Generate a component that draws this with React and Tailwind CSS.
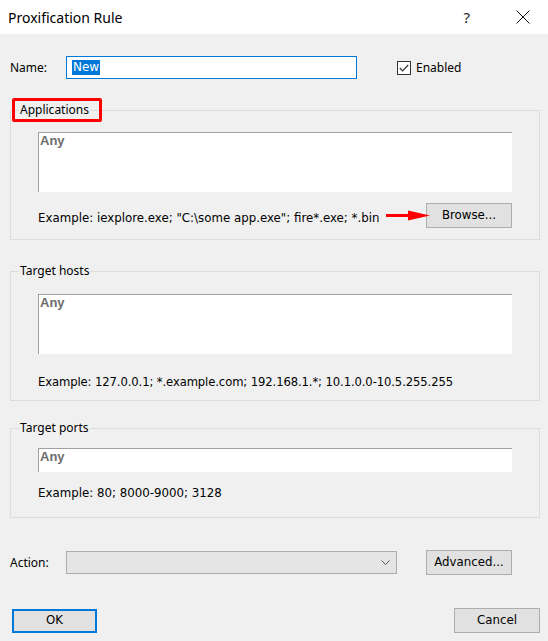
export default function App() {
  const ui = "font-['Noto_Sans',sans-serif]";
  const tah = "font-['DejaVu_Sans',sans-serif]";
  return (
    <div className={`w-[548px] h-[641px] bg-[#f0f0f0] flex flex-col overflow-hidden text-black ${ui} text-[12px]`}>
      {/* Title bar */}
      <div className="h-[34px] bg-white flex items-center shrink-0">
        <span className="pl-[8px] text-[14px] text-black">Proxification Rule</span>
        <span className="ml-auto mr-[46px] text-[15px] text-[#222]">?</span>
        <span className="mr-[18px] flex">
          <svg width="14" height="14" viewBox="0 0 14 14">
            <path d="M0.5 0.5 L13.5 13.5 M13.5 0.5 L0.5 13.5" stroke="#111" strokeWidth="1" fill="none" />
          </svg>
        </span>
      </div>

      <div className="flex flex-col pl-[10px] pr-[8px] pt-[22px]">
        {/* Name row */}
        <div className="h-[23px] flex items-center">
          <span className="w-[56px]">Name:</span>
          <div className="w-[291px] h-[23px] border border-[#0078d7] bg-white flex items-center pl-[5px]">
            <span className={`bg-[#0078d7] text-white px-[1px] leading-[15px] ${tah} text-[12px]`}>New</span>
          </div>
          <div className="ml-[40px] w-[14px] h-[14px] border border-[#333] bg-white flex items-center justify-center">
            <svg width="10" height="8" viewBox="0 0 10 8">
              <path d="M0.8 4 L3.6 6.8 L9.2 1" stroke="#333" strokeWidth="1.2" fill="none" />
            </svg>
          </div>
          <span className="ml-[5px]">Enabled</span>
        </div>

        {/* Applications */}
        <fieldset className="mt-[21px] border border-[#dcdcdc] px-[8px] pb-[11px]">
          <legend className="px-[1px] leading-[20px] relative">
            Applications
            <span className="absolute left-[-7px] right-[-12px] top-[-2px] bottom-[-2px] border-[3px] border-[#ff0000] rounded-[2px]"></span>
          </legend>
          <div className="px-[19px] pt-[12px]">
            <div className="h-[60px] bg-white border-t border-l border-[#a0a0a0] pl-[1px] leading-[16px]">
              <span className="font-['Liberation_Sans',sans-serif] font-bold text-[13px] text-[#6d6d6d]">Any</span>
            </div>
            <div className="mt-[11px] flex items-center justify-between">
              <span className={`${tah} text-[11.8px] pt-[7px]`}>Example: iexplore.exe; "C:\some app.exe"; fire*.exe; *.bin</span>
              <div className="relative">
                <svg className="absolute left-[-40px] top-[7px]" width="44" height="11" viewBox="0 0 44 11">
                  <path d="M0 5.5 L26 5.5" stroke="#ff0000" strokeWidth="3" />
                  <path d="M22 0.5 L44 5.5 L22 10.5 Z" fill="#ff0000" />
                </svg>
                <div className={`w-[86px] h-[25px] border border-[#adadad] bg-[#e1e1e1] flex items-center justify-center ${tah} text-[11.8px]`}>Browse...</div>
              </div>
            </div>
          </div>
        </fieldset>

        {/* Target hosts */}
        <fieldset className="mt-[21px] border border-[#dcdcdc] px-[8px] pb-[8px]">
          <legend className="px-[1px] leading-[20px]">Target hosts</legend>
          <div className="px-[19px] pt-[13px]">
            <div className="h-[60px] bg-white border-t border-l border-[#a0a0a0] pl-[1px] leading-[16px]">
              <span className="font-['Liberation_Sans',sans-serif] font-bold text-[13px] text-[#6d6d6d]">Any</span>
            </div>
            <div className={`mt-[18px] leading-[20px] ${tah} text-[11.6px] tracking-[-0.1px]`}>Example: 127.0.0.1; *.example.com; 192.168.1.*; 10.1.0.0-10.5.255.255</div>
          </div>
        </fieldset>

        {/* Target ports */}
        <fieldset className="mt-[17px] border border-[#dcdcdc] px-[8px] pb-[14px]">
          <legend className="px-[1px] leading-[20px]">Target ports</legend>
          <div className="px-[19px] pt-[10px]">
            <div className="h-[24px] bg-white border-t border-l border-[#a0a0a0] pl-[1px] leading-[16px]">
              <span className="font-['Liberation_Sans',sans-serif] font-bold text-[13px] text-[#6d6d6d]">Any</span>
            </div>
            <div className={`mt-[11px] leading-[20px] ${tah} text-[11.8px]`}>Example: 80; 8000-9000; 3128</div>
          </div>
        </fieldset>

        {/* Action row */}
        <div className="mt-[32px] h-[25px] flex items-center">
          <span className="w-[56px]">Action:</span>
          <div className="w-[331px] h-[23px] border border-[#adadad] bg-[#e5e5e5] flex items-center justify-end pr-[6px]">
            <svg width="9" height="5" viewBox="0 0 9 5">
              <path d="M0.5 0.5 L4.5 4.5 L8.5 0.5" stroke="#555" strokeWidth="1" fill="none" />
            </svg>
          </div>
          <div className={`ml-[29px] w-[86px] h-[25px] border border-[#adadad] bg-[#e1e1e1] flex items-center justify-center ${tah} text-[11.8px]`}>Advanced...</div>
        </div>

        {/* OK / Cancel */}
        <div className="mt-[33px] flex items-center justify-between">
          <div className={`ml-[2px] w-[85px] h-[24px] border-2 border-[#0078d7] bg-[#e1e1e1] flex items-center justify-center ${tah} text-[11.8px]`}>OK</div>
          <div className={`w-[86px] h-[25px] border border-[#adadad] bg-[#e1e1e1] flex items-center justify-center ${tah} text-[11.8px]`}>Cancel</div>
        </div>
      </div>
    </div>
  );
}
